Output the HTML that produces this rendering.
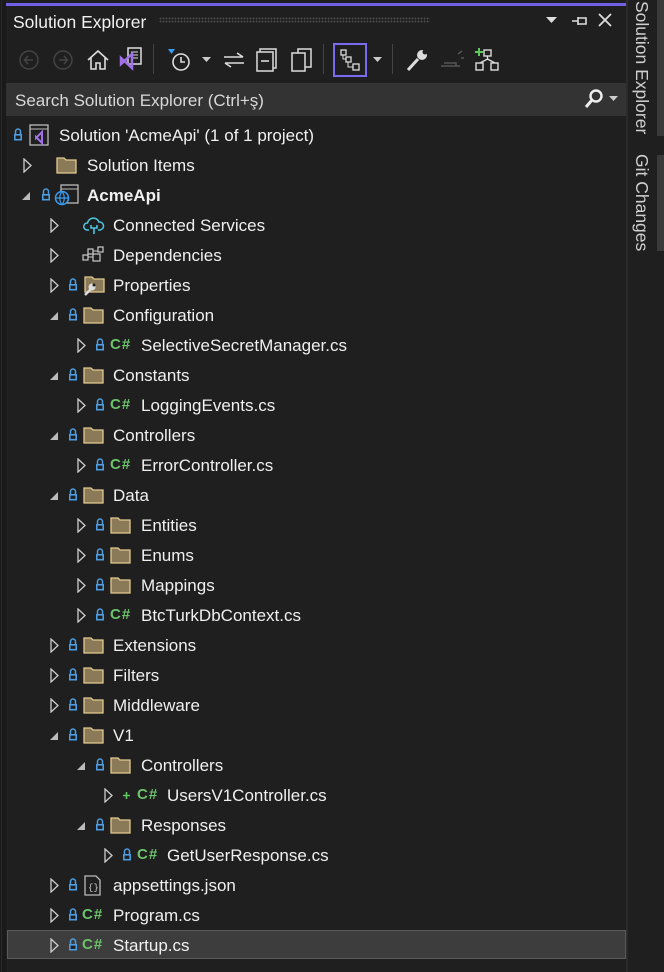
<!DOCTYPE html>
<html><head><meta charset="utf-8"><style>
*{margin:0;padding:0;box-sizing:border-box}
body{width:664px;height:972px;background:#1f1f1f;overflow:hidden;position:relative;font-family:"Liberation Sans","DejaVu Sans",sans-serif;color:#f0f0f0}
.a{position:absolute}
.r{position:absolute;left:0;width:626px;height:30px}
.r>*{position:absolute}
.t{top:6px;font-size:17px;line-height:20px;white-space:nowrap}
.tc{top:8px}
.te{top:12px}
.lk{top:8px}
.fd{top:7px}
.cs{top:5px;font-size:15px;font-weight:bold;color:#6cc36c;letter-spacing:1px;line-height:20px}
</style></head><body>
<div class="a" style="left:0;top:0;width:6px;height:972px;background:#1a1a1a"></div>
<div class="a" style="left:1px;top:0;width:1px;height:972px;background:#2a2a2a"></div>
<div class="a" style="left:6px;top:3px;width:620px;height:3px;background:#7160e8"></div>
<div class="a" style="left:626px;top:0;width:2px;height:972px;background:#2b2b2b"></div>
<div class="a" style="left:657px;top:0;width:7px;height:136px;background:#3a3a3a"></div>
<div class="a" style="left:657px;top:155px;width:7px;height:96px;background:#3a3a3a"></div>
<div class="a" style="left:628px;top:1px;width:26px;height:140px;writing-mode:vertical-rl;font-size:17.5px;color:#cfcfcf;line-height:24px">Solution Explorer</div>
<div class="a" style="left:628px;top:154px;width:26px;height:100px;writing-mode:vertical-rl;font-size:17.5px;color:#cfcfcf;line-height:24px">Git Changes</div>

<div class="a" style="left:13px;top:12px;font-size:17.5px;color:#f0f0f0">Solution Explorer</div>
<div class="a" style="left:159px;top:17px;width:271px;height:6px;background-image:radial-gradient(#4a4a4a 0.8px,transparent 0.9px);background-size:3px 3px"></div>
<svg class="a" style="left:546px;top:17px" width="12" height="8"><path d="M0 0H11L5.5 6Z" fill="#ddd"/></svg>
<svg class="a" style="left:571px;top:14px" width="20" height="14"><path d="M1 7H7M7 3V11M7 4H15V10H7M15 5V9" stroke="#ddd" stroke-width="1.6" fill="none"/></svg>
<svg class="a" style="left:598px;top:13px" width="14" height="14"><path d="M1 1L13 13M13 1L1 13" stroke="#ddd" stroke-width="1.8"/></svg>

<svg class="a" style="left:18px;top:49px" width="22" height="22"><circle cx="11" cy="11" r="9" stroke="#444" stroke-width="1.5" fill="none"/><path d="M15 11H7M10 7L6.5 11L10 15" stroke="#444" stroke-width="1.5" fill="none"/></svg>
<svg class="a" style="left:52px;top:49px" width="22" height="22"><circle cx="11" cy="11" r="9" stroke="#444" stroke-width="1.5" fill="none"/><path d="M7 11H15M12 7L15.5 11L12 15" stroke="#444" stroke-width="1.5" fill="none"/></svg>
<svg class="a" style="left:86px;top:48px" width="24" height="24"><path d="M2 12L12 3L22 12M5 10V21H10V15H14V21H19V10" stroke="#ddd" stroke-width="1.6" fill="none"/></svg>
<svg class="a" style="left:118px;top:46px" width="26" height="28"><rect x="10" y="2" width="13" height="16" stroke="#ddd" stroke-width="1.5" fill="#1f1f1f"/><path d="M13 6H20M13 9H20M13 12H20" stroke="#ddd"/><path d="M3 12L14 22V8L3 18Z" stroke="#a070e8" stroke-width="2.5" fill="none"/></svg>
<div class="a" style="left:153px;top:44px;width:1px;height:30px;background:#444"></div>
<svg class="a" style="left:166px;top:46px" width="28" height="28"><path d="M2 3H9L5.5 8Z" fill="#3b9df2"/><circle cx="15" cy="16" r="8" stroke="#ddd" stroke-width="1.6" fill="none"/><path d="M15 11V16H19" stroke="#ddd" stroke-width="1.6" fill="none"/></svg>
<svg class="a" style="left:202px;top:57px" width="10" height="6"><path d="M0 0H9L4.5 5Z" fill="#ccc"/></svg>
<svg class="a" style="left:222px;top:50px" width="24" height="20"><path d="M2 7H21M15 3L21 7M3 13H22M3 13L9 17" stroke="#ddd" stroke-width="1.6" fill="none"/></svg>
<svg class="a" style="left:255px;top:47px" width="24" height="26"><rect x="5" y="2" width="16" height="19" stroke="#ddd" stroke-width="1.5" fill="none"/><rect x="2" y="5" width="16" height="19" stroke="#ddd" stroke-width="1.5" fill="#1f1f1f"/><path d="M6 14H14" stroke="#ddd" stroke-width="1.6"/></svg>
<svg class="a" style="left:289px;top:47px" width="26" height="26"><rect x="9" y="2" width="13" height="18" stroke="#ddd" stroke-width="1.5" fill="none"/><rect x="3" y="6" width="13" height="18" stroke="#ddd" stroke-width="1.5" fill="#1f1f1f"/></svg>
<div class="a" style="left:323px;top:44px;width:1px;height:30px;background:#444"></div>
<div class="a" style="left:333px;top:43px;width:34px;height:34px;border:2px solid #7a6cf0"></div>
<svg class="a" style="left:338px;top:48px" width="24" height="24"><rect x="3" y="2" width="5" height="5" stroke="#ddd" fill="none" stroke-width="1.3"/><rect x="8" y="9" width="5" height="5" stroke="#ddd" fill="none" stroke-width="1.3"/><rect x="15" y="16" width="6" height="6" stroke="#ddd" fill="none" stroke-width="1.3"/><path d="M5 7V11H8M10 14V19H15" stroke="#ddd" fill="none"/></svg>
<svg class="a" style="left:373px;top:57px" width="10" height="6"><path d="M0 0H9L4.5 5Z" fill="#ccc"/></svg>
<div class="a" style="left:392px;top:44px;width:1px;height:30px;background:#444"></div>
<svg class="a" style="left:404px;top:47px" width="26" height="26"><path d="M4 23L14 12" stroke="#ddd" stroke-width="3"/><circle cx="18" cy="8" r="5" fill="#ddd"/><circle cx="21" cy="5" r="2.5" fill="#1f1f1f"/></svg>
<svg class="a" style="left:438px;top:48px" width="28" height="24"><path d="M3 18H22M6 15H18V18M20 6L24 3M23 10H26" stroke="#555" stroke-width="1.5" fill="none"/></svg>
<svg class="a" style="left:472px;top:46px" width="28" height="28"><path d="M3 6H11M7 2V10" stroke="#5ec85e" stroke-width="2"/><rect x="12" y="4" width="7" height="6" stroke="#ddd" fill="none" stroke-width="1.4"/><path d="M15.5 10V14M8 17L15.5 13L23 17" stroke="#ddd" stroke-width="1.4" fill="none"/><rect x="4" y="17" width="7" height="7" stroke="#ddd" fill="none" stroke-width="1.4"/><rect x="19" y="17" width="7" height="7" stroke="#ddd" fill="none" stroke-width="1.4"/></svg>

<div class="a" style="left:6px;top:83px;width:620px;height:33px;background:#333333"></div>
<div class="a" style="left:15px;top:91px;font-size:17px;color:#d8d8d8">Search Solution Explorer (Ctrl+ş)</div>
<svg class="a" style="left:583px;top:88px" width="22" height="22"><circle cx="13" cy="8" r="5.5" stroke="#eee" stroke-width="2.4" fill="none"/><path d="M9 12L3 19" stroke="#eee" stroke-width="3"/></svg>
<svg class="a" style="left:609px;top:96px" width="10" height="6"><path d="M0 0H9L4.5 5Z" fill="#ccc"/></svg>

<div class="a" style="left:7px;top:930px;width:619px;height:29px;background:#3d3d3d;border:1px solid #5a5a5a"></div>

<div class="r" style="top:120px">
<svg class="lk" style="left:13px" width="10" height="13"><path d="M2.5 6V3.5A2.5 2.5 0 0 1 7.5 3.5V6" stroke="#4e9de0" stroke-width="1.5" fill="none"/><rect x="1" y="6" width="8" height="6.5" fill="#4e9de0"/><rect x="2.6" y="7.6" width="4.8" height="3.3" fill="#1f1f1f"/></svg>
<svg style="left:27px;top:4px" width="24" height="22"><rect x="3" y="1" width="18" height="20" stroke="#bbb" stroke-width="1.3" fill="none"/><path d="M3 5H21" stroke="#bbb"/><path d="M9 13L15 19V8L9 14Z" stroke="#a070e8" stroke-width="2" fill="none"/></svg>
<span class="t" style="left:59px">Solution 'AcmeApi' (1 of 1 project)</span>
</div>
<div class="r" style="top:150px">
<svg class="tc" style="left:23px" width="9" height="15"><path d="M1 1L8 7.5L1 14Z" stroke="#ccc" stroke-width="1.3" fill="none"/></svg>
<svg class="fd" style="left:56px" width="21" height="17"><path d="M1 1H8L10 3H20V16H1Z" fill="#8a7a58" stroke="#e2c98f" stroke-width="1.3"/></svg>
<span class="t" style="left:87px">Solution Items</span>
</div>
<div class="r" style="top:180px">
<svg class="te" style="left:22px" width="8" height="8"><path d="M8 0V8H0Z" fill="#bbb"/></svg>
<svg class="lk" style="left:41px" width="10" height="13"><path d="M2.5 6V3.5A2.5 2.5 0 0 1 7.5 3.5V6" stroke="#4e9de0" stroke-width="1.5" fill="none"/><rect x="1" y="6" width="8" height="6.5" fill="#4e9de0"/><rect x="2.6" y="7.6" width="4.8" height="3.3" fill="#1f1f1f"/></svg>
<svg style="left:54px;top:4px" width="26" height="22"><rect x="7" y="1" width="17" height="18" stroke="#bbb" stroke-width="1.3" fill="none"/><path d="M7 5H24" stroke="#bbb"/><circle cx="8" cy="14" r="6.5" fill="#1f1f1f" stroke="#3b9df2" stroke-width="1.5"/><path d="M1.5 14H14.5M8 7.5C5 11 5 17 8 20.5M8 7.5C11 11 11 17 8 20.5" stroke="#3b9df2" stroke-width="1.2" fill="none"/></svg>
<span class="t" style="left:87px;font-weight:bold">AcmeApi</span>
</div>
<div class="r" style="top:210px">
<svg class="tc" style="left:50px" width="9" height="15"><path d="M1 1L8 7.5L1 14Z" stroke="#ccc" stroke-width="1.3" fill="none"/></svg>
<svg style="left:83px;top:5px" width="22" height="20"><path d="M6 15H4A3.5 3.5 0 0 1 4.5 8A6 6 0 0 1 16 7A4 4 0 0 1 17 15H15" stroke="#4ec6e0" stroke-width="1.5" fill="none"/><path d="M8 10V13H14V10M11 13V19" stroke="#4ec6e0" stroke-width="1.6" fill="none"/></svg>
<span class="t" style="left:113px">Connected Services</span>
</div>
<div class="r" style="top:240px">
<svg class="tc" style="left:50px" width="9" height="15"><path d="M1 1L8 7.5L1 14Z" stroke="#ccc" stroke-width="1.3" fill="none"/></svg>
<svg style="left:82px;top:6px" width="24" height="18"><rect x="1" y="9" width="5" height="5" stroke="#ccc" fill="none" stroke-width="1.2"/><rect x="6" y="3" width="5" height="5" stroke="#ccc" fill="none" stroke-width="1.2"/><rect x="11" y="8" width="7" height="7" stroke="#ccc" fill="none" stroke-width="1.2"/><rect x="16" y="1" width="5" height="5" stroke="#ccc" fill="none" stroke-width="1.2"/><path d="M6 11H11M11 5H16" stroke="#ccc"/></svg>
<span class="t" style="left:113px">Dependencies</span>
</div>
<div class="r" style="top:270px">
<svg class="tc" style="left:50px" width="9" height="15"><path d="M1 1L8 7.5L1 14Z" stroke="#ccc" stroke-width="1.3" fill="none"/></svg>
<svg class="lk" style="left:68px" width="10" height="13"><path d="M2.5 6V3.5A2.5 2.5 0 0 1 7.5 3.5V6" stroke="#4e9de0" stroke-width="1.5" fill="none"/><rect x="1" y="6" width="8" height="6.5" fill="#4e9de0"/><rect x="2.6" y="7.6" width="4.8" height="3.3" fill="#1f1f1f"/></svg>
<svg style="left:82px;top:6px" width="23" height="21"><path d="M3 1H10L12 3H22V16H3Z" fill="#8a7a58" stroke="#e2c98f" stroke-width="1.3"/><path d="M3 19L9 13" stroke="#ddd" stroke-width="2.5"/><circle cx="10" cy="11" r="3.5" fill="#ddd"/><circle cx="12" cy="9" r="1.5" fill="#1f1f1f"/></svg>
<span class="t" style="left:113px">Properties</span>
</div>
<div class="r" style="top:300px">
<svg class="te" style="left:50px" width="8" height="8"><path d="M8 0V8H0Z" fill="#bbb"/></svg>
<svg class="lk" style="left:68px" width="10" height="13"><path d="M2.5 6V3.5A2.5 2.5 0 0 1 7.5 3.5V6" stroke="#4e9de0" stroke-width="1.5" fill="none"/><rect x="1" y="6" width="8" height="6.5" fill="#4e9de0"/><rect x="2.6" y="7.6" width="4.8" height="3.3" fill="#1f1f1f"/></svg>
<svg class="fd" style="left:83px" width="21" height="17"><path d="M1 1H8L10 3H20V16H1Z" fill="#8a7a58" stroke="#e2c98f" stroke-width="1.3"/></svg>
<span class="t" style="left:113px">Configuration</span>
</div>
<div class="r" style="top:330px">
<svg class="tc" style="left:77px" width="9" height="15"><path d="M1 1L8 7.5L1 14Z" stroke="#ccc" stroke-width="1.3" fill="none"/></svg>
<svg class="lk" style="left:95px" width="10" height="13"><path d="M2.5 6V3.5A2.5 2.5 0 0 1 7.5 3.5V6" stroke="#4e9de0" stroke-width="1.5" fill="none"/><rect x="1" y="6" width="8" height="6.5" fill="#4e9de0"/><rect x="2.6" y="7.6" width="4.8" height="3.3" fill="#1f1f1f"/></svg>
<span class="cs" style="left:110px">C#</span>
<span class="t" style="left:141px">SelectiveSecretManager.cs</span>
</div>
<div class="r" style="top:360px">
<svg class="te" style="left:50px" width="8" height="8"><path d="M8 0V8H0Z" fill="#bbb"/></svg>
<svg class="lk" style="left:68px" width="10" height="13"><path d="M2.5 6V3.5A2.5 2.5 0 0 1 7.5 3.5V6" stroke="#4e9de0" stroke-width="1.5" fill="none"/><rect x="1" y="6" width="8" height="6.5" fill="#4e9de0"/><rect x="2.6" y="7.6" width="4.8" height="3.3" fill="#1f1f1f"/></svg>
<svg class="fd" style="left:83px" width="21" height="17"><path d="M1 1H8L10 3H20V16H1Z" fill="#8a7a58" stroke="#e2c98f" stroke-width="1.3"/></svg>
<span class="t" style="left:113px">Constants</span>
</div>
<div class="r" style="top:390px">
<svg class="tc" style="left:77px" width="9" height="15"><path d="M1 1L8 7.5L1 14Z" stroke="#ccc" stroke-width="1.3" fill="none"/></svg>
<svg class="lk" style="left:95px" width="10" height="13"><path d="M2.5 6V3.5A2.5 2.5 0 0 1 7.5 3.5V6" stroke="#4e9de0" stroke-width="1.5" fill="none"/><rect x="1" y="6" width="8" height="6.5" fill="#4e9de0"/><rect x="2.6" y="7.6" width="4.8" height="3.3" fill="#1f1f1f"/></svg>
<span class="cs" style="left:110px">C#</span>
<span class="t" style="left:141px">LoggingEvents.cs</span>
</div>
<div class="r" style="top:420px">
<svg class="te" style="left:50px" width="8" height="8"><path d="M8 0V8H0Z" fill="#bbb"/></svg>
<svg class="lk" style="left:68px" width="10" height="13"><path d="M2.5 6V3.5A2.5 2.5 0 0 1 7.5 3.5V6" stroke="#4e9de0" stroke-width="1.5" fill="none"/><rect x="1" y="6" width="8" height="6.5" fill="#4e9de0"/><rect x="2.6" y="7.6" width="4.8" height="3.3" fill="#1f1f1f"/></svg>
<svg class="fd" style="left:83px" width="21" height="17"><path d="M1 1H8L10 3H20V16H1Z" fill="#8a7a58" stroke="#e2c98f" stroke-width="1.3"/></svg>
<span class="t" style="left:113px">Controllers</span>
</div>
<div class="r" style="top:450px">
<svg class="tc" style="left:77px" width="9" height="15"><path d="M1 1L8 7.5L1 14Z" stroke="#ccc" stroke-width="1.3" fill="none"/></svg>
<svg class="lk" style="left:95px" width="10" height="13"><path d="M2.5 6V3.5A2.5 2.5 0 0 1 7.5 3.5V6" stroke="#4e9de0" stroke-width="1.5" fill="none"/><rect x="1" y="6" width="8" height="6.5" fill="#4e9de0"/><rect x="2.6" y="7.6" width="4.8" height="3.3" fill="#1f1f1f"/></svg>
<span class="cs" style="left:110px">C#</span>
<span class="t" style="left:141px">ErrorController.cs</span>
</div>
<div class="r" style="top:480px">
<svg class="te" style="left:50px" width="8" height="8"><path d="M8 0V8H0Z" fill="#bbb"/></svg>
<svg class="lk" style="left:68px" width="10" height="13"><path d="M2.5 6V3.5A2.5 2.5 0 0 1 7.5 3.5V6" stroke="#4e9de0" stroke-width="1.5" fill="none"/><rect x="1" y="6" width="8" height="6.5" fill="#4e9de0"/><rect x="2.6" y="7.6" width="4.8" height="3.3" fill="#1f1f1f"/></svg>
<svg class="fd" style="left:83px" width="21" height="17"><path d="M1 1H8L10 3H20V16H1Z" fill="#8a7a58" stroke="#e2c98f" stroke-width="1.3"/></svg>
<span class="t" style="left:113px">Data</span>
</div>
<div class="r" style="top:510px">
<svg class="tc" style="left:77px" width="9" height="15"><path d="M1 1L8 7.5L1 14Z" stroke="#ccc" stroke-width="1.3" fill="none"/></svg>
<svg class="lk" style="left:95px" width="10" height="13"><path d="M2.5 6V3.5A2.5 2.5 0 0 1 7.5 3.5V6" stroke="#4e9de0" stroke-width="1.5" fill="none"/><rect x="1" y="6" width="8" height="6.5" fill="#4e9de0"/><rect x="2.6" y="7.6" width="4.8" height="3.3" fill="#1f1f1f"/></svg>
<svg class="fd" style="left:110px" width="21" height="17"><path d="M1 1H8L10 3H20V16H1Z" fill="#8a7a58" stroke="#e2c98f" stroke-width="1.3"/></svg>
<span class="t" style="left:141px">Entities</span>
</div>
<div class="r" style="top:540px">
<svg class="tc" style="left:77px" width="9" height="15"><path d="M1 1L8 7.5L1 14Z" stroke="#ccc" stroke-width="1.3" fill="none"/></svg>
<svg class="lk" style="left:95px" width="10" height="13"><path d="M2.5 6V3.5A2.5 2.5 0 0 1 7.5 3.5V6" stroke="#4e9de0" stroke-width="1.5" fill="none"/><rect x="1" y="6" width="8" height="6.5" fill="#4e9de0"/><rect x="2.6" y="7.6" width="4.8" height="3.3" fill="#1f1f1f"/></svg>
<svg class="fd" style="left:110px" width="21" height="17"><path d="M1 1H8L10 3H20V16H1Z" fill="#8a7a58" stroke="#e2c98f" stroke-width="1.3"/></svg>
<span class="t" style="left:141px">Enums</span>
</div>
<div class="r" style="top:570px">
<svg class="tc" style="left:77px" width="9" height="15"><path d="M1 1L8 7.5L1 14Z" stroke="#ccc" stroke-width="1.3" fill="none"/></svg>
<svg class="lk" style="left:95px" width="10" height="13"><path d="M2.5 6V3.5A2.5 2.5 0 0 1 7.5 3.5V6" stroke="#4e9de0" stroke-width="1.5" fill="none"/><rect x="1" y="6" width="8" height="6.5" fill="#4e9de0"/><rect x="2.6" y="7.6" width="4.8" height="3.3" fill="#1f1f1f"/></svg>
<svg class="fd" style="left:110px" width="21" height="17"><path d="M1 1H8L10 3H20V16H1Z" fill="#8a7a58" stroke="#e2c98f" stroke-width="1.3"/></svg>
<span class="t" style="left:141px">Mappings</span>
</div>
<div class="r" style="top:600px">
<svg class="tc" style="left:77px" width="9" height="15"><path d="M1 1L8 7.5L1 14Z" stroke="#ccc" stroke-width="1.3" fill="none"/></svg>
<svg class="lk" style="left:95px" width="10" height="13"><path d="M2.5 6V3.5A2.5 2.5 0 0 1 7.5 3.5V6" stroke="#4e9de0" stroke-width="1.5" fill="none"/><rect x="1" y="6" width="8" height="6.5" fill="#4e9de0"/><rect x="2.6" y="7.6" width="4.8" height="3.3" fill="#1f1f1f"/></svg>
<span class="cs" style="left:110px">C#</span>
<span class="t" style="left:141px">BtcTurkDbContext.cs</span>
</div>
<div class="r" style="top:630px">
<svg class="tc" style="left:50px" width="9" height="15"><path d="M1 1L8 7.5L1 14Z" stroke="#ccc" stroke-width="1.3" fill="none"/></svg>
<svg class="lk" style="left:68px" width="10" height="13"><path d="M2.5 6V3.5A2.5 2.5 0 0 1 7.5 3.5V6" stroke="#4e9de0" stroke-width="1.5" fill="none"/><rect x="1" y="6" width="8" height="6.5" fill="#4e9de0"/><rect x="2.6" y="7.6" width="4.8" height="3.3" fill="#1f1f1f"/></svg>
<svg class="fd" style="left:83px" width="21" height="17"><path d="M1 1H8L10 3H20V16H1Z" fill="#8a7a58" stroke="#e2c98f" stroke-width="1.3"/></svg>
<span class="t" style="left:113px">Extensions</span>
</div>
<div class="r" style="top:660px">
<svg class="tc" style="left:50px" width="9" height="15"><path d="M1 1L8 7.5L1 14Z" stroke="#ccc" stroke-width="1.3" fill="none"/></svg>
<svg class="lk" style="left:68px" width="10" height="13"><path d="M2.5 6V3.5A2.5 2.5 0 0 1 7.5 3.5V6" stroke="#4e9de0" stroke-width="1.5" fill="none"/><rect x="1" y="6" width="8" height="6.5" fill="#4e9de0"/><rect x="2.6" y="7.6" width="4.8" height="3.3" fill="#1f1f1f"/></svg>
<svg class="fd" style="left:83px" width="21" height="17"><path d="M1 1H8L10 3H20V16H1Z" fill="#8a7a58" stroke="#e2c98f" stroke-width="1.3"/></svg>
<span class="t" style="left:113px">Filters</span>
</div>
<div class="r" style="top:690px">
<svg class="tc" style="left:50px" width="9" height="15"><path d="M1 1L8 7.5L1 14Z" stroke="#ccc" stroke-width="1.3" fill="none"/></svg>
<svg class="lk" style="left:68px" width="10" height="13"><path d="M2.5 6V3.5A2.5 2.5 0 0 1 7.5 3.5V6" stroke="#4e9de0" stroke-width="1.5" fill="none"/><rect x="1" y="6" width="8" height="6.5" fill="#4e9de0"/><rect x="2.6" y="7.6" width="4.8" height="3.3" fill="#1f1f1f"/></svg>
<svg class="fd" style="left:83px" width="21" height="17"><path d="M1 1H8L10 3H20V16H1Z" fill="#8a7a58" stroke="#e2c98f" stroke-width="1.3"/></svg>
<span class="t" style="left:113px">Middleware</span>
</div>
<div class="r" style="top:720px">
<svg class="te" style="left:50px" width="8" height="8"><path d="M8 0V8H0Z" fill="#bbb"/></svg>
<svg class="lk" style="left:68px" width="10" height="13"><path d="M2.5 6V3.5A2.5 2.5 0 0 1 7.5 3.5V6" stroke="#4e9de0" stroke-width="1.5" fill="none"/><rect x="1" y="6" width="8" height="6.5" fill="#4e9de0"/><rect x="2.6" y="7.6" width="4.8" height="3.3" fill="#1f1f1f"/></svg>
<svg class="fd" style="left:83px" width="21" height="17"><path d="M1 1H8L10 3H20V16H1Z" fill="#8a7a58" stroke="#e2c98f" stroke-width="1.3"/></svg>
<span class="t" style="left:113px">V1</span>
</div>
<div class="r" style="top:750px">
<svg class="te" style="left:77px" width="8" height="8"><path d="M8 0V8H0Z" fill="#bbb"/></svg>
<svg class="lk" style="left:95px" width="10" height="13"><path d="M2.5 6V3.5A2.5 2.5 0 0 1 7.5 3.5V6" stroke="#4e9de0" stroke-width="1.5" fill="none"/><rect x="1" y="6" width="8" height="6.5" fill="#4e9de0"/><rect x="2.6" y="7.6" width="4.8" height="3.3" fill="#1f1f1f"/></svg>
<svg class="fd" style="left:110px" width="21" height="17"><path d="M1 1H8L10 3H20V16H1Z" fill="#8a7a58" stroke="#e2c98f" stroke-width="1.3"/></svg>
<span class="t" style="left:141px">Controllers</span>
</div>
<div class="r" style="top:780px">
<svg class="tc" style="left:104px" width="9" height="15"><path d="M1 1L8 7.5L1 14Z" stroke="#ccc" stroke-width="1.3" fill="none"/></svg>
<svg style="left:122px;top:11px" width="9" height="9"><path d="M1 4.5H8M4.5 1V8" stroke="#5ec85e" stroke-width="1.6"/></svg>
<span class="cs" style="left:137px">C#</span>
<span class="t" style="left:167px">UsersV1Controller.cs</span>
</div>
<div class="r" style="top:810px">
<svg class="te" style="left:77px" width="8" height="8"><path d="M8 0V8H0Z" fill="#bbb"/></svg>
<svg class="lk" style="left:95px" width="10" height="13"><path d="M2.5 6V3.5A2.5 2.5 0 0 1 7.5 3.5V6" stroke="#4e9de0" stroke-width="1.5" fill="none"/><rect x="1" y="6" width="8" height="6.5" fill="#4e9de0"/><rect x="2.6" y="7.6" width="4.8" height="3.3" fill="#1f1f1f"/></svg>
<svg class="fd" style="left:110px" width="21" height="17"><path d="M1 1H8L10 3H20V16H1Z" fill="#8a7a58" stroke="#e2c98f" stroke-width="1.3"/></svg>
<span class="t" style="left:141px">Responses</span>
</div>
<div class="r" style="top:840px">
<svg class="tc" style="left:104px" width="9" height="15"><path d="M1 1L8 7.5L1 14Z" stroke="#ccc" stroke-width="1.3" fill="none"/></svg>
<svg class="lk" style="left:122px" width="10" height="13"><path d="M2.5 6V3.5A2.5 2.5 0 0 1 7.5 3.5V6" stroke="#4e9de0" stroke-width="1.5" fill="none"/><rect x="1" y="6" width="8" height="6.5" fill="#4e9de0"/><rect x="2.6" y="7.6" width="4.8" height="3.3" fill="#1f1f1f"/></svg>
<span class="cs" style="left:137px">C#</span>
<span class="t" style="left:167px">GetUserResponse.cs</span>
</div>
<div class="r" style="top:870px">
<svg class="tc" style="left:50px" width="9" height="15"><path d="M1 1L8 7.5L1 14Z" stroke="#ccc" stroke-width="1.3" fill="none"/></svg>
<svg class="lk" style="left:68px" width="10" height="13"><path d="M2.5 6V3.5A2.5 2.5 0 0 1 7.5 3.5V6" stroke="#4e9de0" stroke-width="1.5" fill="none"/><rect x="1" y="6" width="8" height="6.5" fill="#4e9de0"/><rect x="2.6" y="7.6" width="4.8" height="3.3" fill="#1f1f1f"/></svg>
<svg style="left:84px;top:5px" width="18" height="21"><path d="M1 1H12L16 5V20H1Z" stroke="#bbb" stroke-width="1.3" fill="none"/><text x="4" y="15" font-size="9" fill="#ccc" font-family="Liberation Mono">{}</text></svg>
<span class="t" style="left:113px">appsettings.json</span>
</div>
<div class="r" style="top:900px">
<svg class="tc" style="left:50px" width="9" height="15"><path d="M1 1L8 7.5L1 14Z" stroke="#ccc" stroke-width="1.3" fill="none"/></svg>
<svg class="lk" style="left:68px" width="10" height="13"><path d="M2.5 6V3.5A2.5 2.5 0 0 1 7.5 3.5V6" stroke="#4e9de0" stroke-width="1.5" fill="none"/><rect x="1" y="6" width="8" height="6.5" fill="#4e9de0"/><rect x="2.6" y="7.6" width="4.8" height="3.3" fill="#1f1f1f"/></svg>
<span class="cs" style="left:82px">C#</span>
<span class="t" style="left:113px">Program.cs</span>
</div>
<div class="r" style="top:930px">
<svg class="tc" style="left:50px" width="9" height="15"><path d="M1 1L8 7.5L1 14Z" stroke="#ccc" stroke-width="1.3" fill="none"/></svg>
<svg class="lk" style="left:68px" width="10" height="13"><path d="M2.5 6V3.5A2.5 2.5 0 0 1 7.5 3.5V6" stroke="#4e9de0" stroke-width="1.5" fill="none"/><rect x="1" y="6" width="8" height="6.5" fill="#4e9de0"/><rect x="2.6" y="7.6" width="4.8" height="3.3" fill="#1f1f1f"/></svg>
<span class="cs" style="left:82px">C#</span>
<span class="t" style="left:113px">Startup.cs</span>
</div>
</body></html>
